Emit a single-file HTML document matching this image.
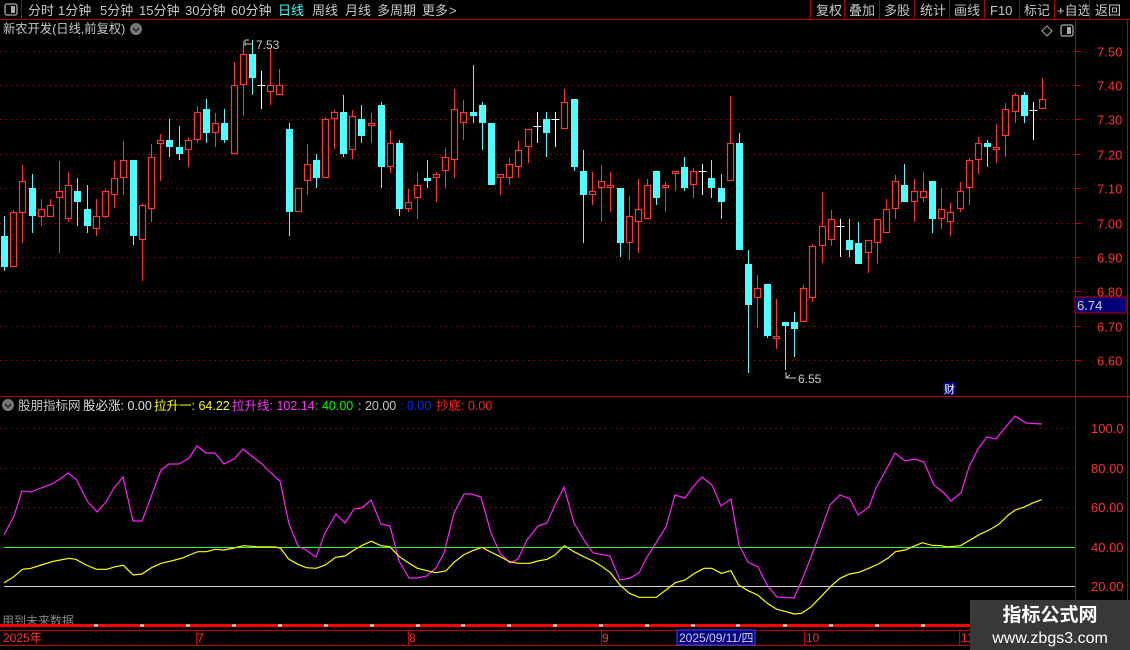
<!DOCTYPE html>
<html><head><meta charset="utf-8">
<style>
html,body{margin:0;padding:0;background:#000;}
body{width:1130px;height:650px;overflow:hidden;position:relative;font-family:"Liberation Sans","Noto Sans CJK SC",sans-serif;}
svg{position:absolute;left:0;top:0;}
</style></head>
<body>
<svg id="s" width="1130" height="650" xmlns="http://www.w3.org/2000/svg" font-family="Liberation Sans, Noto Sans CJK SC, sans-serif">
<rect width="1130" height="650" fill="#000"/>
<line x1="0" y1="19.5" x2="1130" y2="19.5" stroke="#b00000"/>
<line x1="21.5" y1="0" x2="21.5" y2="20" stroke="#b00000"/>
<rect x="5" y="4" width="12" height="11" rx="2" fill="none" stroke="#aaa" stroke-width="1.3"/>
<rect x="11" y="6" width="4" height="7" fill="#aaa"/>
<g font-size="13" fill="#c8c8c8">
<text x="28" y="15">分时</text><text x="58" y="15">1分钟</text><text x="100" y="15">5分钟</text><text x="139" y="15">15分钟</text><text x="185" y="15">30分钟</text><text x="231" y="15">60分钟</text><text x="278" y="15" fill="#40ffff">日线</text><text x="312" y="15">周线</text><text x="345" y="15">月线</text><text x="377" y="15">多周期</text><text x="422" y="15">更多</text><text x="449" y="15">&gt;</text>
<text x="816" y="15">复权</text><text x="849" y="15">叠加</text><text x="884" y="15">多股</text><text x="920" y="15">统计</text><text x="954" y="15">画线</text><text x="990" y="15">F10</text><text x="1024" y="15">标记</text><text x="1057" y="15">+自选</text><text x="1095" y="15">返回</text>
</g>
<g stroke="#b00000"><line x1="810.5" y1="0" x2="810.5" y2="19"/><line x1="844.5" y1="0" x2="844.5" y2="19"/><line x1="879.5" y1="0" x2="879.5" y2="19"/><line x1="914.5" y1="0" x2="914.5" y2="19"/><line x1="949.5" y1="0" x2="949.5" y2="19"/><line x1="984.5" y1="0" x2="984.5" y2="19"/><line x1="1019.5" y1="0" x2="1019.5" y2="19"/><line x1="1054.5" y1="0" x2="1054.5" y2="19"/><line x1="1089.5" y1="0" x2="1089.5" y2="19"/></g>
<text x="3" y="33" font-size="12.3" fill="#c8c8c8">新农开发(日线,前复权)</text>
<circle cx="136" cy="29" r="6" fill="#777"/><path d="M133 28 L136 31 L139 28" stroke="#222" stroke-width="1.5" fill="none"/>
<path d="M1047 26 L1052 31 L1047 36 L1042 31Z" fill="none" stroke="#aaa"/>
<rect x="1061" y="25" width="12" height="11" rx="2" fill="none" stroke="#aaa" stroke-width="1.3"/><rect x="1067" y="27" width="4" height="7" fill="#aaa"/>
<line x1="1075.5" y1="20" x2="1075.5" y2="628" stroke="#c00000"/>
<line x1="1127.5" y1="20" x2="1127.5" y2="628" stroke="#c00000"/>
<line x1="0" y1="396.5" x2="1130" y2="396.5" stroke="#c00000"/>
<g id="grid"></g>
<g id="cand"></g>
<g font-size="13" fill="#ff3030" id="plab"></g>
<rect x="1075" y="297" width="51" height="16" fill="#00007a" stroke="#c00000"/>
<text x="1077" y="310" font-size="13" fill="#d0d0d0">6.74</text>
<path d="M245 40 L245 46 M245 44 L253 44 M245 40 L249 40" stroke="#ccc" fill="none"/>
<text x="256" y="49" font-size="12" fill="#ccc">7.53</text>
<path d="M786 372 L786 378 M786 378 L796 378 M786 378 L790 375" stroke="#ccc" fill="none"/>
<text x="798" y="383" font-size="12" fill="#ccc">6.55</text>
<rect x="943" y="382" width="13" height="13" fill="#00007a"/><text x="944" y="393" font-size="11" fill="#fff">财</text>
<circle cx="8" cy="405" r="6" fill="#777"/><path d="M5 404 L8 407 L11 404" stroke="#222" stroke-width="1.5" fill="none"/>
<g font-size="12.5">
<text x="18" y="410" fill="#c8c8c8">股朋指标网</text>
<text x="83" y="410" fill="#e0e0e0">股必涨: 0.00</text>
<text x="154" y="410" fill="#ffff00">拉升一: 64.22</text>
<text x="232" y="410" fill="#ff30ff">拉升线: 102.14</text>
<text x="315" y="410" fill="#00ff00">: 40.00</text>
<text x="358" y="410" fill="#c8c8c8">: 20.00</text>
<text x="400" y="410" fill="#0030ff">: 0.00</text>
<text x="436" y="410" fill="#ff2020">抄底: 0.00</text>
</g>
<g stroke="#a00000" stroke-dasharray="1.5 4"><line x1="0" y1="428.5" x2="1075" y2="428.5"/><line x1="0" y1="468.5" x2="1075" y2="468.5"/><line x1="0" y1="507.5" x2="1075" y2="507.5"/></g>
<line x1="4" y1="547.5" x2="1075" y2="547.5" stroke="#30ff30"/>
<line x1="4" y1="586.5" x2="1075" y2="586.5" stroke="#d0d0d0"/>
<g font-size="13" fill="#ff3030"><text x="1091" y="433">100.0</text><text x="1091" y="473">80.00</text><text x="1091" y="512">60.00</text><text x="1091" y="552">40.00</text><text x="1091" y="591">20.00</text></g>
<polyline id="mag" fill="none" stroke="#ff20ff" stroke-width="1.2"/>
<polyline id="yel" fill="none" stroke="#ffff00" stroke-width="1.2"/>
<text x="2" y="625" font-size="12" fill="#888">用到未来数据</text>
<rect x="0" y="624" width="1130" height="3" fill="#ff0000"/>
<g id="dash" fill="#fff"></g>
<line x1="0" y1="630.5" x2="1130" y2="630.5" stroke="#c00000"/>
<line x1="0" y1="645.5" x2="1130" y2="645.5" stroke="#c00000"/>
<g font-size="12" fill="#ff3030"><text x="3" y="642">2025年</text><text x="197" y="642">7</text><text x="409" y="642">8</text><text x="602" y="642">9</text><text x="806" y="642">10</text><text x="961" y="642">11</text></g>
<g stroke="#c00000"><line x1="196.5" y1="631" x2="196.5" y2="645"/><line x1="408.5" y1="631" x2="408.5" y2="645"/><line x1="601.5" y1="631" x2="601.5" y2="645"/><line x1="804.5" y1="631" x2="804.5" y2="645"/><line x1="959.5" y1="631" x2="959.5" y2="645"/></g>
<rect x="677" y="630" width="78" height="15" fill="#00007a" stroke="#3050ff"/>
<text x="679" y="642" font-size="12" fill="#d0d0ff">2025/09/11/四</text>
<rect x="970" y="600" width="160" height="50" fill="#3a3737"/>
<text x="1050" y="621" font-size="19" font-weight="bold" fill="#fff" text-anchor="middle">指标公式网</text>
<text x="1050" y="643" font-size="16" fill="#fff" text-anchor="middle">www.zbgs3.com</text>
</svg>
<script>
var NS="http://www.w3.org/2000/svg";
function el(t,a,p){var e=document.createElementNS(NS,t);for(var k in a)e.setAttribute(k,a[k]);document.getElementById(p).appendChild(e);return e;}
var lab=["7.50","7.40","7.30","7.20","7.10","7.00","6.90","6.80","6.70","6.60"];
for(var i=0;i<10;i++){var y=Math.round(50.6+i*34.4)+0.5;el("line",{x1:0,y1:y,x2:1075,y2:y,stroke:"#a00000","stroke-dasharray":"1.5 4"},"grid");
var t=el("text",{x:1097,y:y+5},"plab");t.textContent=lab[i];
el("line",{x1:1075,y1:y,x2:1081,y2:y,stroke:"#c00000"},"grid");}
var C=[[4,'c',236,267,216,271],[13,'r',212,267,210,267],[22,'r',181,213,165,243],[32,'c',188,216,174,233],[41,'r',209,217,199,226],[50,'r',205,217,199,217],[59,'r',191,198,161,253],[68,'r',185,219,172,222],[77,'c',191,202,178,226],[87,'c',209,226,185,233],[96,'r',216,229,199,236],[105,'r',191,217,189,218],[114,'r',178,195,161,208],[123,'r',160,178,141,195],[133,'c',160,236,160,245],[142,'r',205,240,203,281],[151,'r',157,209,144,222],[160,'r',140,144,134,181],[169,'c',140,147,119,157],[179,'c',147,154,126,160],[188,'r',140,150,137,167],[197,'r',112,140,106,143],[206,'c',109,133,99,143],[215,'r',123,133,113,147],[224,'c',123,140,109,143],[234,'r',85,154,62,154],[243,'r',54,85,41,116],[252,'c',54,78,40,95],[261,'w',85,85,71,109],[270,'r',85,92,48,105],[279,'r',85,95,69,95],[289,'c',129,212,123,236],[298,'r',188,212,188,212],[307,'r',164,181,144,195],[316,'c',160,178,154,188],[325,'r',119,178,117,178],[334,'r',112,119,110,149],[343,'c',112,154,95,157],[352,'r',116,150,110,159],[361,'c',119,136,105,143],[371,'r',123,126,113,143],[381,'c',105,167,102,188],[390,'r',143,167,130,173],[399,'c',143,209,140,216],[408,'r',202,209,189,212],[417,'r',185,198,172,219],[427,'c',178,181,160,188],[436,'r',174,178,172,202],[445,'r',157,171,148,188],[454,'r',109,160,89,178],[463,'r',112,123,100,140],[473,'c',112,116,65,123],[482,'c',105,123,102,150],[491,'c',123,185,123,185],[500,'r',174,178,174,195],[509,'r',164,178,158,185],[518,'r',150,167,141,178],[528,'r',129,147,129,163],[537,'w',126,126,112,143],[546,'c',119,133,112,157],[555,'w',119,119,112,147],[564,'r',102,129,89,129],[574,'c',99,167,99,171],[583,'c',171,195,150,243],[592,'r',191,195,172,205],[601,'r',181,188,165,222],[610,'r',185,188,172,212],[620,'c',188,243,188,257],[629,'r',216,243,196,260],[638,'r',209,222,179,253],[647,'r',185,219,179,219],[656,'c',171,198,171,205],[665,'r',185,188,182,212],[675,'r',171,174,171,191],[684,'c',167,188,157,191],[693,'r',171,185,168,198],[702,'w',171,171,164,195],[711,'c',178,188,160,198],[721,'c',188,202,174,219],[730,'r',143,181,96,181],[739,'c',143,250,133,250],[748,'c',264,305,250,373],[757,'r',288,298,275,328],[767,'c',284,336,284,338],[776,'r',336,339,299,349],[785,'c',322,326,322,370],[794,'c',322,329,312,357],[803,'r',288,322,285,322],[812,'r',246,298,244,302],[822,'r',226,246,192,263],[831,'r',219,240,210,246],[840,'w',226,226,219,257],[849,'c',240,250,219,257],[858,'c',243,264,222,264],[868,'r',240,253,240,273],[877,'r',219,243,219,264],[886,'r',209,233,199,233],[895,'r',181,209,175,219],[904,'c',185,202,164,202],[914,'r',191,202,179,222],[923,'r',191,198,172,202],[932,'c',181,219,181,233],[941,'r',209,219,188,229],[950,'r',212,222,203,236],[960,'r',191,209,182,212],[969,'r',160,188,158,205],[978,'r',143,160,137,174],[987,'c',143,147,140,167],[996,'r',147,150,124,163],[1005,'r',109,136,103,157],[1015,'r',95,112,93,123],[1024,'c',95,116,92,123],[1033,'w',110,110,102,140],[1042,'r',99,109,78,109]];
C.forEach(function(c){var x=c[0]+0.5,col=c[1]=='r'?'#ff3535':c[1]=='c'?'#50ffff':'#ffffff';
el("line",{x1:x,y1:c[4],x2:x,y2:c[5],stroke:col},"cand");
if(c[1]=='w'){el("line",{x1:x-4,y1:c[2]+0.5,x2:x+4,y2:c[2]+0.5,stroke:col},"cand");}
else if(c[1]=='c'){el("rect",{x:c[0]-3,y:c[2],width:7,height:Math.max(2,c[3]-c[2]),fill:col},"cand");}
else{el("rect",{x:c[0]-2.5,y:c[2]+0.5,width:6,height:Math.max(1,c[3]-c[2]-1),fill:"#000",stroke:col,"stroke-width":1.2},"cand");}});
var M=[4,535,14,516,22,491,31,492,41,488,52,484,60,479,68,473,76,479,88,502,97,512,106,502,114,488,123,477,133,521,142,521,151,497,161,470,169,464,179,464,189,458,197,446,206,453,215,453,224,464,234,459,243,449,253,457,262,464,270,472,280,481,289,524,298,546,306,550,316,557,325,533,336,514,345,523,354,509,362,508,371,500,381,524,390,526,399,561,409,578,417,578,427,576,436,568,444,553,454,513,464,494,471,494,481,497,491,533,500,553,510,563,518,559,527,540,538,526,547,523,555,505,564,487,574,523,584,540,593,553,610,556,620,580,630,578,639,573,647,557,656,543,666,527,675,495,685,498,693,487,702,477,712,485,721,506,731,499,739,545,748,562,758,567,767,585,777,597,794,598,802,580,811,557,821,530,830,505,840,495,850,499,858,515,869,507,876,488,886,470,895,453,905,461,915,459,924,462,934,485,943,492,951,501,961,493,969,467,978,449,987,437,996,439,1005,428,1015,416,1026,423,1042,424];
var Yz8=[12,548,40,530,65,508,90,505,120,495,150,485,175,480,200,475,220,478,250,495,280,508,310,508,335,500,358,496,387,525,412,522,440,503,468,490,500,482,530,474,550,465,575,455,600,455,625,448,650,450,680,444,707,437,745,440,800,441,815,445,838,477,865,493,890,503,918,505,945,495,975,472,1002,468,1028,450,1052,436,1078,424,1106,437,1132,440,1160,470,1188,490,1212,505,1240,512,1265,518,1295,513,1318,487,1346,465,1372,452,1400,442,1425,456,1453,470,1480,485,1505,490,1540,490];
var Yz9=[0,490,20,483,45,478,65,465,90,437,115,455,140,470,165,483,185,497,210,518,235,555,260,580,285,592,330,592,355,570,380,548,405,540,430,520,455,505,475,505,500,520,525,512,545,555,570,572,595,585,620,610,645,628,670,635,690,642,710,640,735,620,760,590,785,560,810,535,835,522,860,517,885,505,910,492,935,475,955,455,980,450,1000,440,1025,428,1050,436,1075,437,1090,441,1125,437,1150,420,1175,403,1200,390,1225,373,1250,345,1268,330,1290,322,1315,308,1337,299];
var mp=[];for(var i=0;i<M.length;i+=2)mp.push(M[i]+","+M[i+1]);
document.getElementById("mag").setAttribute("points",mp.join(" "));
var yp=[];for(var i=0;i<Yz8.length;i+=2)yp.push((Yz8[i]/2.904).toFixed(1)+","+(400+Yz8[i+1]/3).toFixed(1));
for(var i=0;i<Yz9.length;i+=2)yp.push((530+Yz9[i]/2.613).toFixed(1)+","+(400+Yz9[i+1]/3).toFixed(1));
document.getElementById("yel").setAttribute("points",yp.join(" "));
[96,142,188,234,280,326,372,418,463,509,555,601,647,693,738,785,831,877,923].forEach(function(x){el("rect",{x:x-2,y:624.5,width:4,height:2},"dash");});
</script>
</body></html>
